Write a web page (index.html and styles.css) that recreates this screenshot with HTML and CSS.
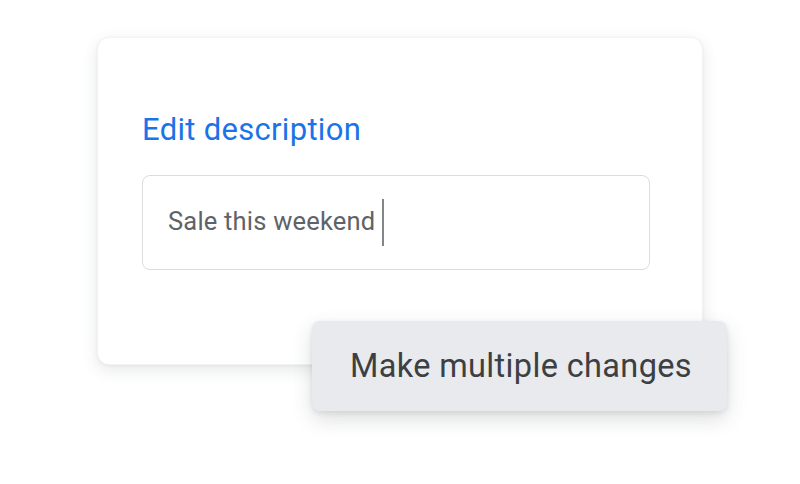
FILE: index.html
```html
<!DOCTYPE html>
<html>
<head>
<meta charset="utf-8">
<link rel="stylesheet" href="styles.css">
</head>
<body>
<div class="stage">
  <div class="card">
    <h1 class="title">Edit description</h1>
    <div class="field">
      <span class="value">Sale this weekend</span><span class="caret"></span>
    </div>
  </div>
  <div class="chip">Make multiple changes</div>
</div>
</body>
</html>
```
FILE: styles.css
```css
html, body {
  margin: 0;
  padding: 0;
  background: #ffffff;
}
body {
  width: 800px;
  height: 484px;
  overflow: hidden;
  font-family: Roboto, "Open Sans", sans-serif;
}
.stage {
  position: relative;
  padding: 37px 0 0 97px;
}
.card {
  box-sizing: border-box;
  width: 606px;
  height: 328px;
  background: #fff;
  border-radius: 12px;
  border: 1px solid #f1f3f4;
  box-shadow: 0 5px 16px rgba(60, 64, 67, 0.12), 0 1px 3px rgba(60, 64, 67, 0.06);
  padding: 72px 0 0 44px;
}
.title {
  margin: 0;
  font-weight: 400;
  font-size: 31px;
  line-height: 40px;
  color: #1a73e8;
  letter-spacing: 0.3px;
}
.field {
  box-sizing: border-box;
  margin-top: 25px;
  width: 508px;
  height: 95px;
  border: 1.5px solid #dadce0;
  border-radius: 8px;
  display: flex;
  align-items: center;
  padding: 0 0 3px 25px;
}
.value {
  font-size: 25.5px;
  color: #5f6368;
  letter-spacing: 0.2px;
}
.caret {
  width: 2px;
  height: 47px;
  background: #80868b;
  margin: 2px 0 0 7px;
}
.chip {
  position: absolute;
  left: 312px;
  top: 321px;
  width: 415px;
  height: 90px;
  box-sizing: border-box;
  background: #e8eaed;
  border-radius: 8px;
  box-shadow: 0 8px 20px rgba(60, 64, 67, 0.18), 0 2px 5px rgba(60, 64, 67, 0.1);
  display: flex;
  align-items: center;
  padding-left: 38px;
  font-size: 32.5px;
  color: #3c4043;
  letter-spacing: 0.35px;
}
```
